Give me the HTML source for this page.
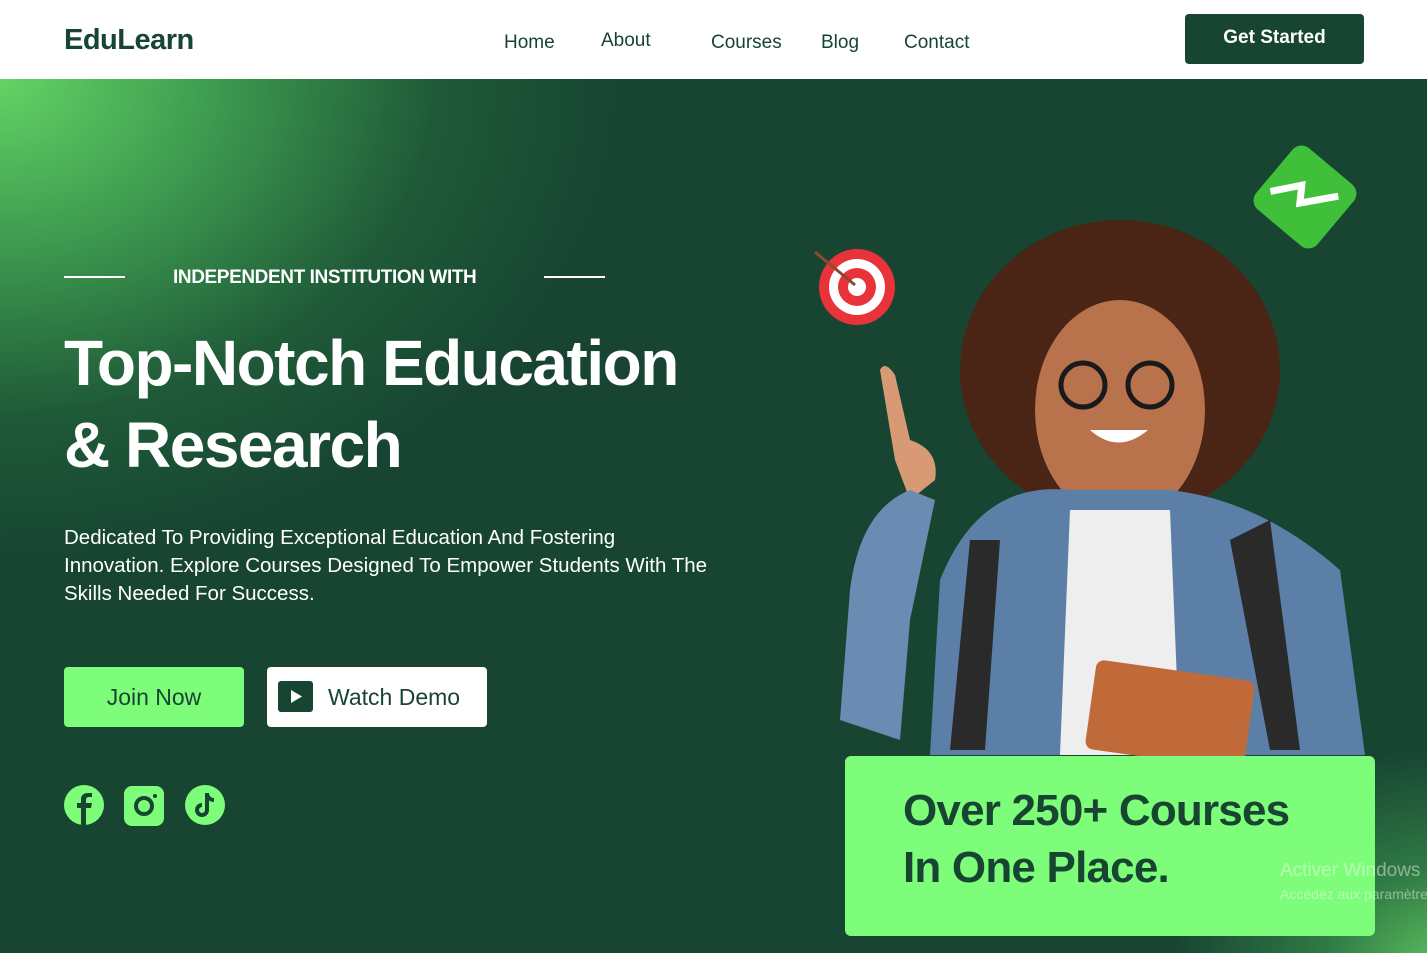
<!DOCTYPE html>
<html><head><meta charset="utf-8"><style>
*{margin:0;padding:0;box-sizing:border-box}
html,body{width:1427px;height:953px;overflow:hidden}
body{font-family:"Liberation Sans",sans-serif;background:#174532;position:relative}
.nav{position:absolute;left:0;top:0;width:1427px;height:79px;background:#fff;z-index:2}
.logo{position:absolute;left:64px;top:24px;font-size:29px;font-weight:bold;color:#174532;letter-spacing:-0.5px}
.nav a{position:absolute;top:32px;font-size:19px;color:#174532;text-decoration:none}
.gs{position:absolute;left:1185px;top:14px;width:179px;height:50px;background:#174532;border-radius:4px;color:#fff;font-size:19px;font-weight:bold;text-align:center;line-height:48px}
.hero{position:absolute;left:0;top:79px;width:1427px;height:874px;overflow:hidden;background:radial-gradient(ellipse 620px 480px at 0px 0px,#63d365 0%,#3d9a4f 35%,#1f5a38 70%,#174532 100%)}
.glow{position:absolute;left:1150px;top:650px;width:300px;height:240px;background:radial-gradient(ellipse at 100% 100%,#5fc460 0%,#2f7a44 30%,rgba(23,69,50,0) 65%)}
.line{position:absolute;top:276px;width:61px;height:2px;background:#fff}
.tag{position:absolute;left:173px;top:267px;color:#fff;font-size:19px;font-weight:bold;letter-spacing:-0.4px}
h1{position:absolute;left:64px;top:322px;color:#fff;font-size:64px;line-height:82px;font-weight:bold;letter-spacing:-1.5px;white-space:nowrap}
.p{position:absolute;left:64px;top:524px;color:#fff;font-size:20.5px;line-height:28px;width:645px}
.b1{position:absolute;left:64px;top:667px;width:180px;height:60px;background:#7efd7a;border-radius:4px;color:#174532;font-size:23px;text-align:center;line-height:60px}
.b2{position:absolute;left:267px;top:667px;width:220px;height:60px;background:#fff;border-radius:4px;color:#174532;font-size:23px;line-height:60px;padding-left:61px}
.pl{position:absolute;left:11px;top:14px;width:35px;height:31px;background:#174532;border-radius:3px}
.pl svg{display:block}
.card{position:absolute;left:845px;top:756px;width:530px;height:180px;background:#7efd7a;border-radius:6px;padding:26px 0 0 58px;color:#174532;font-size:44px;font-weight:bold;line-height:57px;letter-spacing:-0.8px}
.wm{position:absolute;left:1280px;top:860px;color:rgba(255,255,255,.45);font-size:19px;white-space:nowrap}
.wm2{position:absolute;left:1280px;top:886px;color:rgba(255,255,255,.45);font-size:14px;white-space:nowrap}
</style></head><body>
<div class="nav">
<div class="logo">EduLearn</div>
<a style="left:504px">Home</a><a style="left:601px;top:30px">About</a><a style="left:711px">Courses</a><a style="left:821px">Blog</a><a style="left:904px">Contact</a>
<div class="gs">Get Started</div>
</div>
<div class="hero"><div class="glow"></div></div>
<div class="line" style="left:64px"></div><div class="line" style="left:544px"></div>
<div class="tag">INDEPENDENT INSTITUTION WITH</div>
<h1>Top-Notch Education<br>&amp; Research</h1>
<div class="p">Dedicated To Providing Exceptional Education And Fostering Innovation. Explore Courses Designed To Empower Students With The Skills Needed For Success.</div>
<div class="b1">Join Now</div>
<div class="b2"><div class="pl"><svg width="35" height="31"><path d="M13 9 L24 15.5 L13 22Z" fill="#fff"/></svg></div>Watch Demo</div>
<svg style="position:absolute;left:64px;top:785px" width="162" height="42">
<circle cx="20" cy="20" r="20" fill="#7efd7a"/><path d="M22 41V23h5l1-5h-6v-3c0-2 1-3 3-3h3V8h-4c-4 0-7 2-7 6v4h-4v5h4v18z" fill="#174532"/>
<rect x="60" y="1" width="40" height="40" rx="8" fill="#7efd7a"/><circle cx="80" cy="21" r="8" fill="none" stroke="#174532" stroke-width="4"/><circle cx="91" cy="11" r="2" fill="#174532"/>
<circle cx="141" cy="20" r="20" fill="#7efd7a"/><path d="M143 8v17a5 5 0 1 1-5-5" fill="none" stroke="#174532" stroke-width="4"/><path d="M143 9c1 4 4 6 7 6" fill="none" stroke="#174532" stroke-width="4"/>
</svg>
<svg style="position:absolute;left:800px;top:140px" width="580" height="620">
<g transform="rotate(40 505 57)"><rect x="465" y="17" width="80" height="80" rx="12" fill="#3fbf3a"/><path d="M475 75 L495 50 L505 65 L530 35" stroke="#fff" stroke-width="7" fill="none"/></g>
<circle cx="57" cy="147" r="38" fill="#e8333b"/><circle cx="57" cy="147" r="28" fill="#fff"/><circle cx="57" cy="147" r="19" fill="#e8333b"/><circle cx="57" cy="147" r="9" fill="#fff"/><line x1="15" y1="112" x2="55" y2="145" stroke="#8a4b2a" stroke-width="3"/>
<ellipse cx="320" cy="230" rx="160" ry="150" fill="#4a2414"/>
<ellipse cx="320" cy="270" rx="85" ry="110" fill="#b8734d"/>
<circle cx="283" cy="245" r="22" fill="none" stroke="#1a1a1a" stroke-width="5"/><circle cx="350" cy="245" r="22" fill="none" stroke="#1a1a1a" stroke-width="5"/>
<path d="M290 290 Q318 315 348 290Z" fill="#fff"/>
<path d="M130 615 L140 440 Q180 340 270 350 L370 350 Q460 360 540 430 L565 615Z" fill="#5b7fa6"/>
<path d="M270 370 L370 370 L380 615 L260 615Z" fill="#eeeeee"/>
<path d="M170 400 L150 610 L185 610 L200 400Z" fill="#2a2a2a"/>
<path d="M430 400 L470 610 L500 610 L470 380Z" fill="#2a2a2a"/>
<path d="M95 320 L80 230 Q85 220 95 235 L110 300 Q140 310 135 340 L110 360Z" fill="#d89a74"/>
<path d="M50 450 Q60 370 110 350 L135 360 L110 480 L100 600 L40 580Z" fill="#6a8cb2"/>
<rect x="290" y="530" width="160" height="90" rx="8" fill="#c06a3a" transform="rotate(8 370 575)"/>
</svg>
<div class="card">Over 250+ Courses<br>In One Place.</div>
<div class="wm">Activer Windows</div><div class="wm2">Accédez aux paramètres</div>
</body></html>
